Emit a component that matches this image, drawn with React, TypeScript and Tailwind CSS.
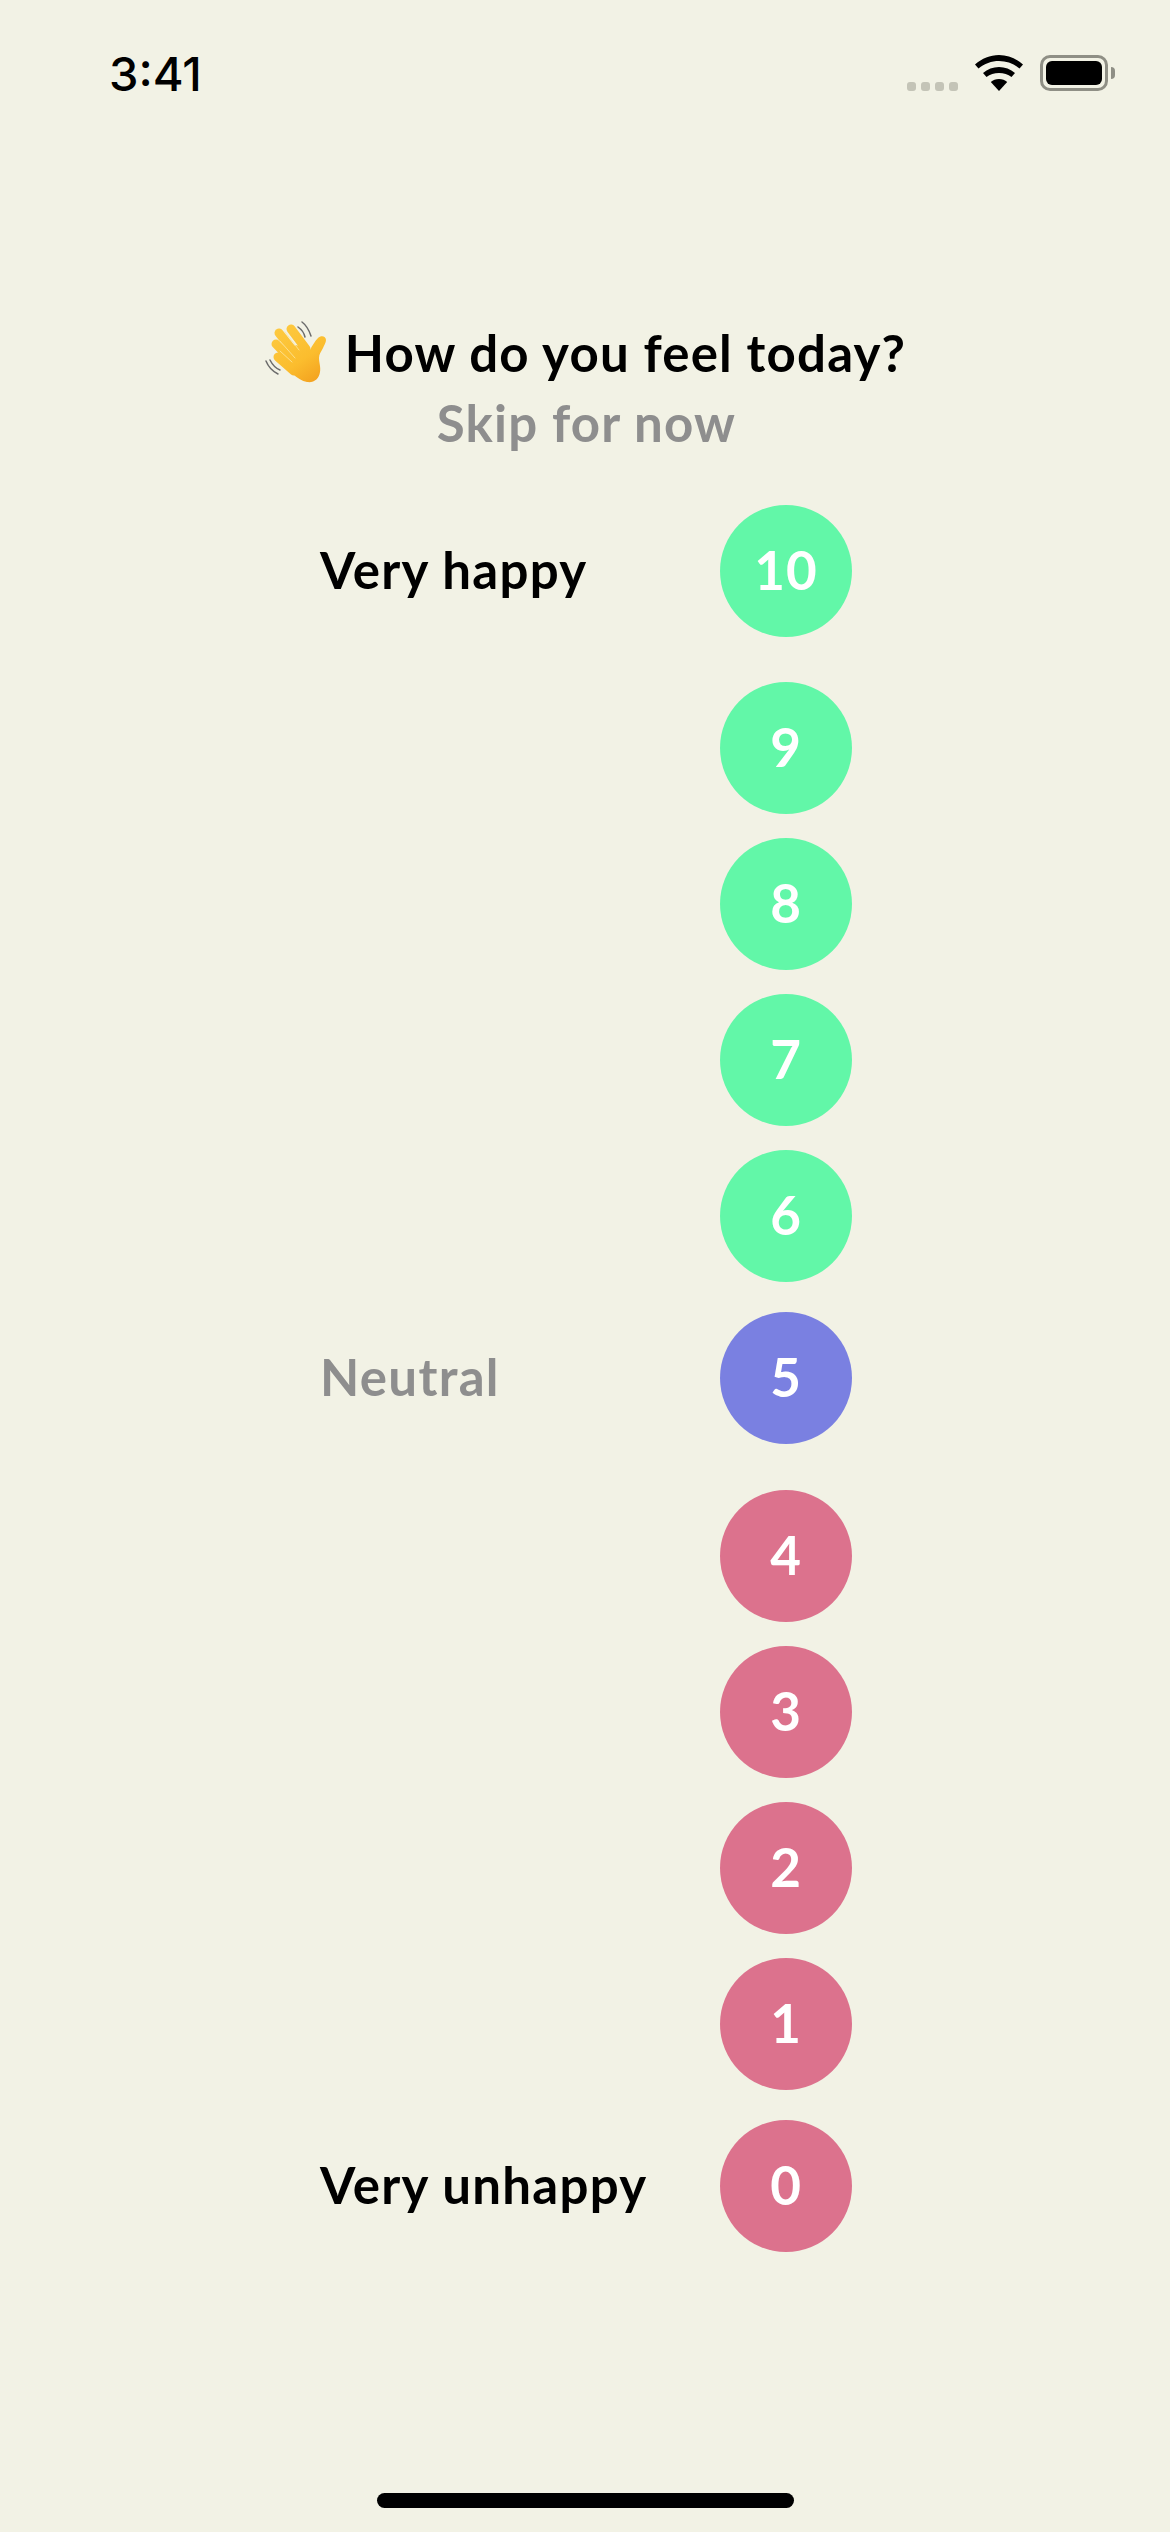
const rows = [
  { n: "10", c: "bg-[#62f7a8]", mt: "mt-0", label: "Very happy", tone: "text-black" },
  { n: "9", c: "bg-[#62f7a8]", mt: "mt-[45px]" },
  { n: "8", c: "bg-[#62f7a8]", mt: "mt-[24px]" },
  { n: "7", c: "bg-[#62f7a8]", mt: "mt-[24px]" },
  { n: "6", c: "bg-[#62f7a8]", mt: "mt-[24px]" },
  { n: "5", c: "bg-[#7a80e1]", mt: "mt-[30px]", label: "Neutral", tone: "text-[#8e8e8e]" },
  { n: "4", c: "bg-[#dc728d]", mt: "mt-[46px]" },
  { n: "3", c: "bg-[#dc728d]", mt: "mt-[24px]" },
  { n: "2", c: "bg-[#dc728d]", mt: "mt-[24px]" },
  { n: "1", c: "bg-[#dc728d]", mt: "mt-[24px]" },
  { n: "0", c: "bg-[#dc728d]", mt: "mt-[30px]", label: "Very unhappy", tone: "text-black" },
];

function Wave() {
  return (
    <svg width="66" height="66" viewBox="11 10 66 66" className="shrink-0">
      <defs>
        <linearGradient id="h" gradientUnits="userSpaceOnUse" x1="25" y1="20" x2="62" y2="74">
          <stop offset="0" stopColor="#fdc93f" />
          <stop offset="0.6" stopColor="#fbbd2e" />
          <stop offset="1" stopColor="#f3a11f" />
        </linearGradient>
      </defs>
      <g fill="none" stroke="#6b6b6b" strokeWidth="1.5" strokeLinecap="round">
        <path d="M49 13c4 3 7 8 9 14" />
        <path d="M45 18c3 2 6 6 7 10" />
        <path d="M13 52c2 5 6 10 12 13" />
        <path d="M17 51c2 4 5 8 10 10" />
      </g>
      <g stroke="url(#h)" strokeWidth="9" strokeLinecap="round" fill="none">
        <path d="M38 20l15 20" />
        <path d="M26 24l19 24" />
        <path d="M23 35l20 21" />
        <path d="M25 48l16 14" />
      </g>
      <path
        d="M42 36l12 2 3 3c2-4 5-9 8-12 3-3 8-2 8 2 0 3-2 5-3 8-2 4-4 6-4 10 0 5 2 9 1 14-1 7-6 11-13 10-5-1-10-4-15-9l-7-7z"
        fill="url(#h)"
      />
      <g stroke="#fde6a0" strokeWidth="0.8" strokeLinecap="round" fill="none">
        <path d="M32 23l14 18" />
        <path d="M27 32l15 17" />
        <path d="M27 42l12 11" />
      </g>
    </svg>
  );
}

function Wifi() {
  return (
    <svg width="48" height="36" viewBox="0 0 48 36">
      <path d="M24 0c9 0 17 3.500 24 9.500l-3.500 4C38.500 8.500 31.500 6 24 6S9.500 8.500 3.500 13.500L0 9.500C7 3.500 15 0 24 0z" fill="#000" />
      <path d="M24 12c6 0 11.500 2 16 6l-3.500 4C33 19.300 28.700 18 24 18s-9 1.300-12.500 4L8 18c4.500-4 10-6 16-6z" fill="#000" />
      <path d="M24 24c3.300 0 6 1 8.200 3L24 36l-8.200-9c2.200-2 4.900-3 8.200-3z" fill="#000" />
    </svg>
  );
}

export default function App() {
  return (
    <div className="w-[1170px] h-[2532px] bg-[#f2f2e5] flex flex-col font-['Lato',sans-serif] overflow-hidden">
      <div className="h-[150px] flex items-start justify-between pl-[109px] pr-[55px] pt-[47px]">
        <span className="font-['Inter',sans-serif] font-medium text-[47px] leading-[56px] -mt-[1px] text-black">3:41</span>
        <div className="flex items-start pt-[8px]">
          <div className="flex gap-[5px] mt-[27px] mr-[17px]">
            <span className="w-[9px] h-[9px] rounded-[3px] bg-[#c4c4b7]" />
            <span className="w-[9px] h-[9px] rounded-[3px] bg-[#c4c4b7]" />
            <span className="w-[9px] h-[9px] rounded-[3px] bg-[#c4c4b7]" />
            <span className="w-[9px] h-[9px] rounded-[3px] bg-[#c4c4b7]" />
          </div>
          <Wifi />
          <div className="flex items-center ml-[17px]">
            <div className="w-[68px] h-[36px] rounded-[10px] border-[3px] border-[#8f8f85] p-[3px]">
              <div className="w-full h-full rounded-[6px] bg-black" />
            </div>
            <div className="w-[4px] h-[12px] ml-[3px] rounded-r-[4px] bg-[#8f8f85]" />
          </div>
        </div>
      </div>

      <div className="mt-[169px] h-[66px] flex items-center justify-center gap-[15px]">
        <Wave />
        <span className="text-[51px] leading-[66px] font-bold tracking-[1.2px] text-black pt-[2px]">How do you feel today?</span>
      </div>
      <div className="mt-[5px] pl-[3px] text-center text-[51px] leading-[66px] font-bold tracking-[1.2px] text-[#8e8e8e]">Skip for now</div>

      <div className="mt-[49px] pl-[320px] flex flex-col">
        {rows.map((r) => (
          <div key={r.n} className={`${r.mt} flex items-center`}>
            <span className={`w-[400px] text-[51px] leading-[66px] font-bold tracking-[1.3px] pb-[3px] ${r.tone ?? ""}`}>{r.label ?? ""}</span>
            <div className={`${r.c} w-[132px] h-[132px] rounded-full flex items-center justify-center text-white text-[53px] leading-none font-bold tracking-[1px] pb-[4px]`}>
              {r.n}
            </div>
          </div>
        ))}
      </div>

      <div className="mt-auto mb-[24px] mx-auto w-[417px] h-[15px] rounded-full bg-black" />
    </div>
  );
}
